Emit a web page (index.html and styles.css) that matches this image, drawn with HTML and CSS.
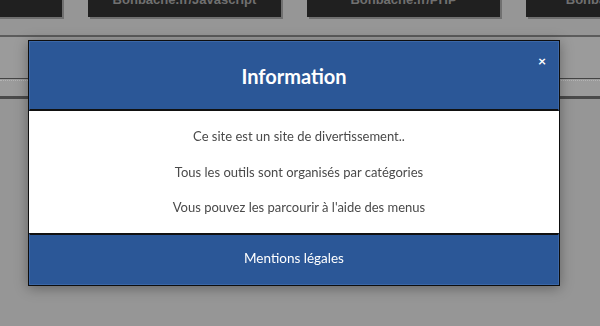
FILE: index.html
```html
<!DOCTYPE html>
<html lang="fr">
<head>
    <meta charset="UTF-8">
    <meta name="viewport" content="width=device-width, initial-scale=1.0">
    <title>Bonbache.fr - Information</title>
    <link rel="stylesheet" href="styles.css">
</head>
<body>
    <div class="page">
        <div class="menu">
            <div class="menu-item">Accueil</div>
            <div class="menu-item">Bonbache.fr/Javascript</div>
            <div class="menu-item">Bonbache.fr/PHP</div>
            <div class="menu-item">Bonbache.fr/Excel</div>
        </div>
        <div class="band">
            <div class="band-line"></div>
            <div class="band-dots"></div>
        </div>
    </div>

    <div class="overlay">
        <div class="modal">
            <div class="modal-header">
                <h1>Information</h1>
                <span class="close">&times;</span>
            </div>
            <div class="modal-body">
                <p>Ce site est un site de divertissement..</p>
                <p>Tous les outils sont organisés par catégories</p>
                <p>Vous pouvez les parcourir à l'aide des menus</p>
            </div>
            <div class="modal-footer">Mentions légales</div>
        </div>
    </div>
</body>
</html>
```

FILE: styles.css
```css
* {
    margin: 0;
    padding: 0;
    box-sizing: border-box;
}

body {
    font-family: 'Lato', 'Open Sans', sans-serif;
    background-color: #969696;
    height: 326px;
    overflow: hidden;
}

.menu {
    display: flex;
    gap: 26px;
    margin-left: -131px;
    margin-top: -24px;
}

.menu-item {
    flex: 0 0 193px;
    height: 41px;
    background-color: #202020;
    color: #707070;
    font-family: 'Liberation Sans', Arial, sans-serif;
    font-weight: bold;
    font-size: 13px;
    text-align: center;
    line-height: 48px;
    overflow: hidden;
    box-shadow: 2px 2px 0 #707070;
}

.band {
    margin-top: 18px;
    height: 64px;
    border-top: 2px solid #5c5c5c;
    border-bottom: 3px solid #4a4a4a;
    background-color: #9b9b9b;
}

.band-line {
    margin-top: 41px;
    border-top: 1px solid #444;
}

.band-dots {
    margin-top: 1px;
    border-top: 1px dotted #b4b4b4;
}

.overlay {
    position: fixed;
    inset: 0;
}

.modal {
    position: absolute;
    left: 28px;
    top: 40px;
    width: 532px;
    border: 1px solid #0e0e0e;
    background-color: #fff;
    box-shadow: 0 2px 12px rgba(0, 0, 0, 0.35);
}

.modal-header {
    position: relative;
    height: 70px;
    background-color: #2b5797;
    border: 1px solid #3b67a7;
    border-bottom: 2px solid #111;
    display: flex;
    align-items: center;
    justify-content: center;
}

.modal-header h1 {
    color: #fff;
    font-size: 20px;
    font-weight: bold;
}

.close {
    position: absolute;
    right: 12px;
    top: 10px;
    color: #fff;
    font-size: 14px;
    font-weight: bold;
}

.modal-body {
    height: 122px;
    padding-top: 16px;
    padding-left: 10px;
    text-align: center;
    color: #4a4a4a;
    font-size: 13px;
}

.modal-body p {
    line-height: 18px;
    margin-bottom: 17.5px;
}

.modal-footer {
    height: 52px;
    background-color: #2b5797;
    border: 1px solid #3b67a7;
    border-top: 2px solid #111;
    color: #fff;
    font-size: 13.5px;
    text-align: center;
    line-height: 47px;
}
```
